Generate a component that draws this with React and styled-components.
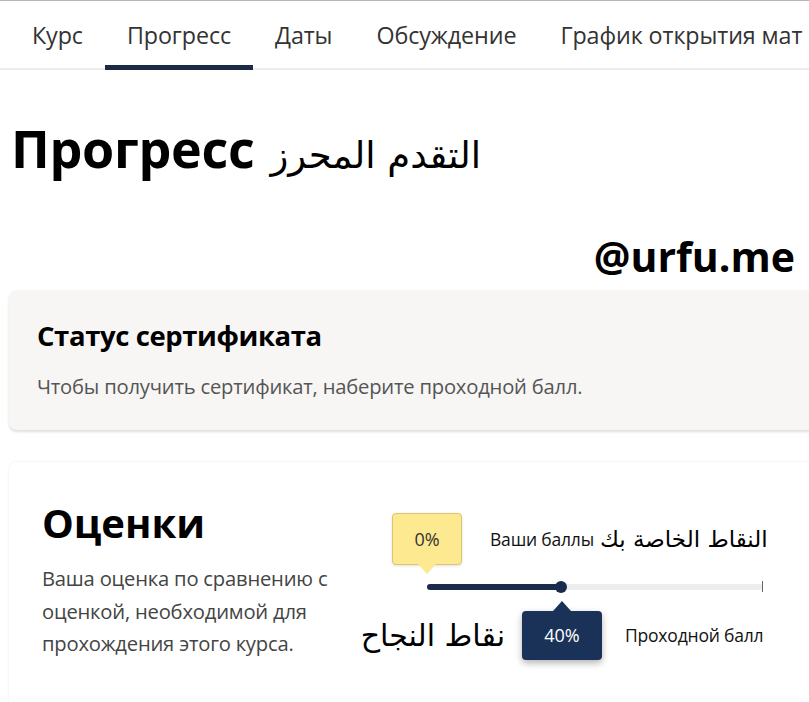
import React from "react";
import styled, { createGlobalStyle } from "styled-components";

const GlobalStyle = createGlobalStyle`
  html, body {
    margin: 0;
    padding: 0;
    background: #fff;
    overflow-x: hidden;
  }
  body {
    font-family: "Open Sans", "Noto Sans", sans-serif;
    color: #111;
  }
`;

const tabs = ["Курс", "Прогресс", "Даты", "Обсуждение", "График открытия мат"];

const Page = styled.div`
  width: 809px;
  overflow: hidden;
  border-top: 1px solid #b5b5b5;
`;

const Nav = styled.nav`
  display: flex;
  height: 69px;
  box-sizing: border-box;
  padding-left: 10px;
  border-bottom: 2px solid #ececec;
  white-space: nowrap;
`;

const Tab = styled.div`
  display: flex;
  align-items: center;
  flex: none;
  box-sizing: border-box;
  height: 69px;
  padding: 3px 22px 0;
  font-size: 23.3px;
  letter-spacing: -0.1px;
  color: #333;
  border-bottom: 5px solid ${(p) => (p.active ? "#1c2b45" : "transparent")};
`;

const Content = styled.main`
  padding: 0 0 0 9px;
`;

const TitleRow = styled.div`
  display: flex;
  align-items: baseline;
  gap: 16px;
  padding: 42px 0 0 2px;
  height: 84px;
`;

const Title = styled.h1`
  margin: 0;
  font-size: 52px;
  font-weight: 700;
  letter-spacing: -0.3px;
  color: #000;
`;

const ArabicNote = styled.span`
  font-family: "DejaVu Sans", sans-serif;
  font-size: ${(p) => p.size || 30}px;
  color: #000;
  direction: rtl;
  white-space: nowrap;
`;

const Handle = styled.div`
  text-align: right;
  padding-right: 14px;
  font-size: 41px;
  font-weight: 700;
  color: #000;
  line-height: 52px;
  margin-top: 34px;
  margin-bottom: 8px;
`;

const Card = styled.section`
  margin-right: -12px;
  border-radius: 8px;
  background: ${(p) => (p.muted ? "#f7f6f4" : "#fff")};
  box-shadow: ${(p) =>
    p.muted
      ? "0 2px 3px rgba(0,0,0,0.13)"
      : "0 0 3px rgba(0,0,0,0.08)"};
`;

const CertCard = styled(Card)`
  height: 140px;
  box-sizing: border-box;
  padding: 28px 28px 0;
`;

const CardTitle = styled.h2`
  margin: 0;
  font-size: 27.5px;
  font-weight: 700;
  letter-spacing: -0.4px;
  color: #000;
  line-height: 36px;
`;

const CardText = styled.p`
  margin: 18px 0 0;
  font-size: 20.2px;
  color: #555;
  letter-spacing: -0.2px;
`;

const GradesCard = styled(Card)`
  margin-top: 32px;
  height: 260px;
  display: flex;
  padding: 37px 0 0 33px;
  box-sizing: border-box;
`;

const GradesInfo = styled.div`
  width: 321px;
`;

const GradesTitle = styled.h2`
  margin: 0;
  font-size: 40px;
  font-weight: 700;
  color: #000;
  line-height: 48px;
`;

const GradesText = styled.p`
  margin: 15px 0 0;
  font-size: 20.2px;
  line-height: 32.5px;
  color: #444;
  letter-spacing: -0.2px;
`;

const Chart = styled.div`
  width: 420px;
  padding-top: 14px;
`;

const TopRow = styled.div`
  display: flex;
  align-items: flex-start;
  padding-left: 29px;
  height: 71px;
`;

const BottomRow = styled.div`
  display: flex;
  align-items: center;
  height: 80px;
  padding-top: 10px;
  box-sizing: border-box;
`;

const Tip = styled.div`
  position: relative;
  flex: none;
  display: flex;
  align-items: center;
  justify-content: center;
  box-sizing: border-box;
  font-size: 18px;
  border-radius: 4px;
  ${(p) =>
    p.navy
      ? `
    width: 80px; height: 49px;
    background: #1b3258; color: #fff;
    box-shadow: 0 3px 7px rgba(0,0,0,0.3);
  `
      : `
    width: 70px; height: 52px;
    background: #fde98f; color: #333;
    border: 1px solid #dcc56e;
    box-shadow: 0 1px 3px rgba(0,0,0,0.12);
  `}

  &::after {
    content: "";
    position: absolute;
    left: 50%;
    margin-left: -9px;
    border-left: 9px solid transparent;
    border-right: 9px solid transparent;
    ${(p) =>
      p.navy
        ? `top: -10px; border-bottom: 10px solid #1b3258;`
        : `bottom: -10px; border-top: 10px solid #fde98f;`}
  }
`;

const Label = styled.span`
  font-size: 17.5px;
  color: #111;
  white-space: nowrap;
  letter-spacing: -0.2px;
`;

const TopLabel = styled(Label)`
  line-height: 52px;
  margin-left: 28px;
`;

const TopArabic = styled(ArabicNote)`
  line-height: 52px;
  margin-left: 6px;
`;

const PassArabic = styled(ArabicNote)`
  width: 159px;
  box-sizing: border-box;
  padding-right: 17px;
`;

const Track = styled.div`
  position: relative;
  margin-left: 64px;
  width: 336px;
  height: 6px;
  background: #eeeded;
  border-radius: 3px;

  &::after {
    content: "";
    position: absolute;
    right: 0;
    top: -3px;
    width: 1px;
    height: 11px;
    background: #666;
  }
`;

const Fill = styled.div`
  height: 100%;
  background: #1b2b4b;
  border-radius: 3px;
  position: relative;
`;

const Dot = styled.span`
  position: absolute;
  right: -6px;
  top: -3px;
  width: 12px;
  height: 12px;
  border-radius: 50%;
  background: #1b2b4b;
`;

export default function App() {
  const passing = 40;
  return (
    <Page>
      <GlobalStyle />
      <Nav>
        {tabs.map((t) => (
          <Tab key={t} active={t === "Прогресс"}>
            {t}
          </Tab>
        ))}
      </Nav>
      <Content>
        <TitleRow>
          <Title>Прогресс</Title>
          <ArabicNote size={37}>التقدم المحرز</ArabicNote>
        </TitleRow>
        <Handle>@urfu.me</Handle>
        <CertCard muted>
          <CardTitle>Статус сертификата</CardTitle>
          <CardText>Чтобы получить сертификат, наберите проходной балл.</CardText>
        </CertCard>
        <GradesCard>
          <GradesInfo>
            <GradesTitle>Оценки</GradesTitle>
            <GradesText>
              Ваша оценка по сравнению с оценкой, необходимой для прохождения этого курса.
            </GradesText>
          </GradesInfo>
          <Chart>
            <TopRow>
              <Tip>0%</Tip>
              <TopLabel>Ваши баллы</TopLabel>
              <TopArabic size={23}>النقاط الخاصة بك</TopArabic>
            </TopRow>
            <Track>
              <Fill style={{ width: `${passing}%` }}>
                <Dot />
              </Fill>
            </Track>
            <BottomRow>
              <PassArabic size={30}>نقاط النجاح</PassArabic>
              <Tip navy>{passing}%</Tip>
              <Label style={{ marginLeft: 23 }}>Проходной балл</Label>
            </BottomRow>
          </Chart>
        </GradesCard>
      </Content>
    </Page>
  );
}
